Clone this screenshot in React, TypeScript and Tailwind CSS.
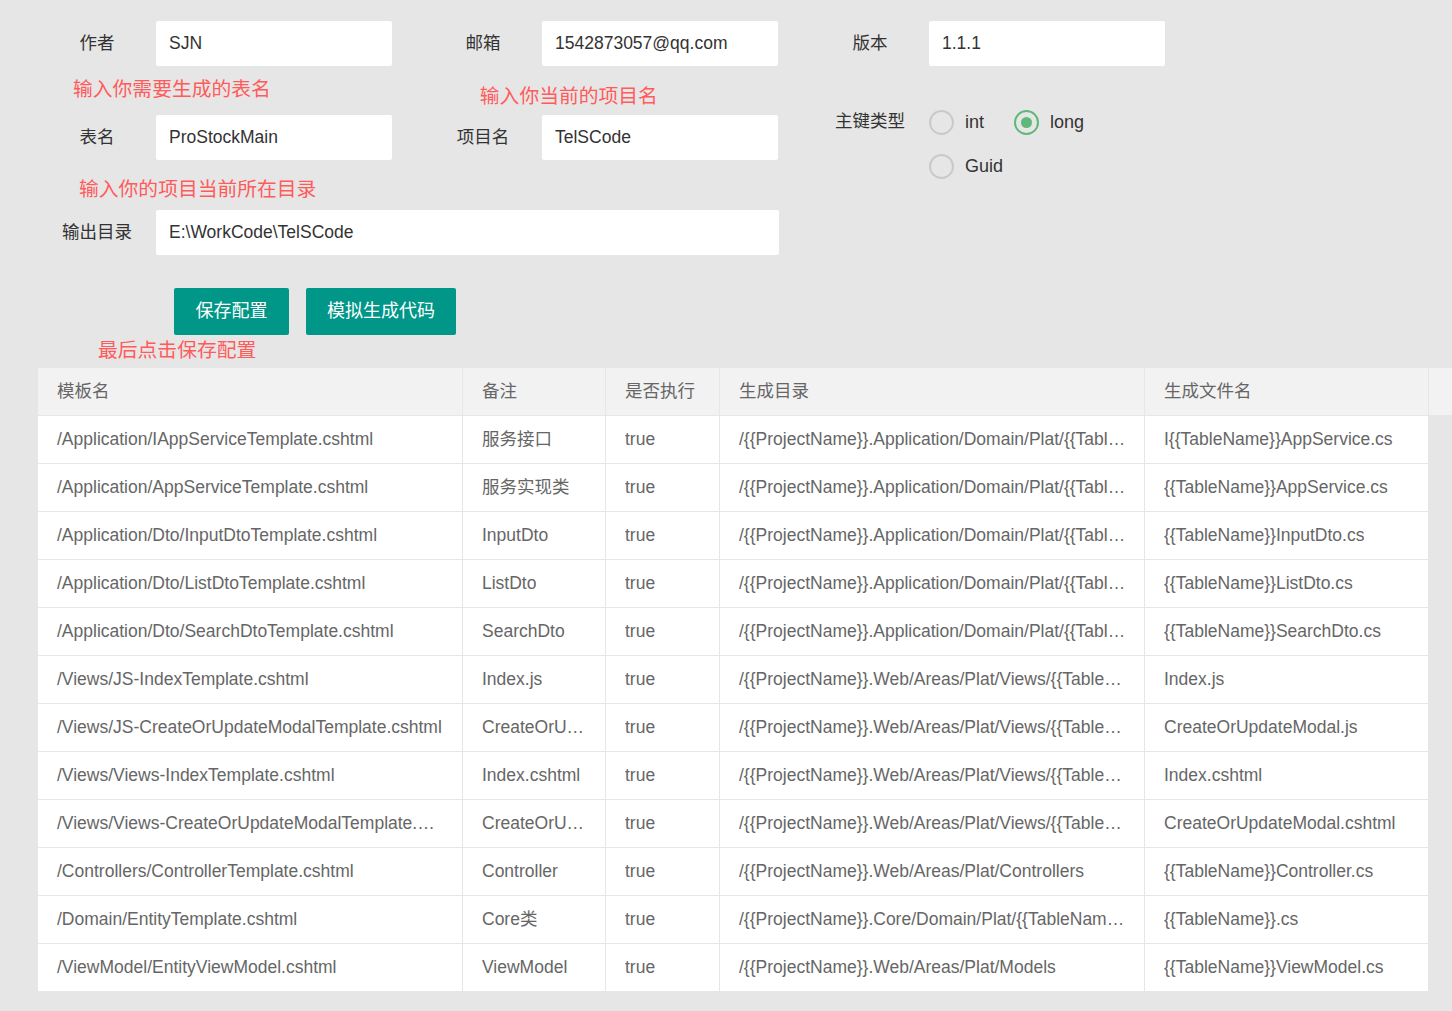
import React from 'react';

const rows: [string, string, string, string][] = [
  ['/Application/IAppServiceTemplate.cshtml', '服务接口', '/{{ProjectName}}.Application/Domain/Plat/{{TableName}}', 'I{{TableName}}AppService.cs'],
  ['/Application/AppServiceTemplate.cshtml', '服务实现类', '/{{ProjectName}}.Application/Domain/Plat/{{TableName}}', '{{TableName}}AppService.cs'],
  ['/Application/Dto/InputDtoTemplate.cshtml', 'InputDto', '/{{ProjectName}}.Application/Domain/Plat/{{TableName}}/Dto', '{{TableName}}InputDto.cs'],
  ['/Application/Dto/ListDtoTemplate.cshtml', 'ListDto', '/{{ProjectName}}.Application/Domain/Plat/{{TableName}}/Dto', '{{TableName}}ListDto.cs'],
  ['/Application/Dto/SearchDtoTemplate.cshtml', 'SearchDto', '/{{ProjectName}}.Application/Domain/Plat/{{TableName}}/Dto', '{{TableName}}SearchDto.cs'],
  ['/Views/JS-IndexTemplate.cshtml', 'Index.js', '/{{ProjectName}}.Web/Areas/Plat/Views/{{TableName}}', 'Index.js'],
  ['/Views/JS-CreateOrUpdateModalTemplate.cshtml', 'CreateOrUpdateModal', '/{{ProjectName}}.Web/Areas/Plat/Views/{{TableName}}', 'CreateOrUpdateModal.js'],
  ['/Views/Views-IndexTemplate.cshtml', 'Index.cshtml', '/{{ProjectName}}.Web/Areas/Plat/Views/{{TableName}}', 'Index.cshtml'],
  ['/Views/Views-CreateOrUpdateModalTemplate.cshtml', 'CreateOrUpdateModal', '/{{ProjectName}}.Web/Areas/Plat/Views/{{TableName}}', 'CreateOrUpdateModal.cshtml'],
  ['/Controllers/ControllerTemplate.cshtml', 'Controller', '/{{ProjectName}}.Web/Areas/Plat/Controllers', '{{TableName}}Controller.cs'],
  ['/Domain/EntityTemplate.cshtml', 'Core类', '/{{ProjectName}}.Core/Domain/Plat/{{TableName}}s/Entities', '{{TableName}}.cs'],
  ['/ViewModel/EntityViewModel.cshtml', 'ViewModel', '/{{ProjectName}}.Web/Areas/Plat/Models', '{{TableName}}ViewModel.cs'],
];

const font = { fontFamily: '"Liberation Sans", Arial, "Noto Sans CJK SC", sans-serif' };

function Field({ label, value, width = 'w-[236px]' }: { label: string; value: string; width?: string }) {
  return (
    <div className="flex items-center">
      <label className="w-[118px] text-center text-[17.5px] text-[#333]">{label}</label>
      <div className={`${width} h-[45px] bg-white rounded-[2px] flex items-center px-[13px] text-[17.5px] text-[#333]`}>
        {value}
      </div>
    </div>
  );
}

function Radio({ label, checked }: { label: string; checked?: boolean }) {
  return (
    <div className="flex items-center gap-[11px] mr-[30px]">
      <span
        className={`w-[25px] h-[25px] rounded-full border-2 flex items-center justify-center ${checked ? 'border-[#5FB878]' : 'border-[#c9c9c9]'}`}
      >
        {checked && <span className="w-[11px] h-[11px] rounded-full bg-[#5FB878]" />}
      </span>
      <span className="text-[18px] text-[#333]">{label}</span>
    </div>
  );
}

export default function App() {
  const cols = ['w-[424px]', 'w-[143px]', 'w-[114px]', 'w-[425px]', 'w-[284px]'];
  const pads = ['pr-[19px]', 'pr-[19px]', 'pr-[19px]', 'pr-[14px]', 'pr-[19px]'];
  return (
    <div className="min-h-screen bg-[#e6e6e6] pb-[19px]" style={font}>
      <div className="flex pl-[38px] pt-[21px]">
        {/* left block */}
        <div className="flex flex-col">
          <div className="flex gap-[32px]">
            <Field label="作者" value="SJN" />
            <Field label="邮箱" value="1542873057@qq.com" />
          </div>
          <div className="h-[49px] flex items-start">
            <span className="ml-[35px] mt-[11px] text-[19.8px] text-[#ff5b5b] leading-[24px]">输入你需要生成的表名</span>
            <span className="ml-[209px] mt-[18px] text-[19.8px] text-[#ff5b5b] leading-[24px]">输入你当前的项目名</span>
          </div>
          <div className="flex gap-[32px]">
            <Field label="表名" value="ProStockMain" />
            <Field label="项目名" value="TelSCode" />
          </div>
          <div className="h-[50px] flex items-start">
            <span className="ml-[41px] mt-[17px] text-[19.8px] text-[#ff5b5b] leading-[24px]">输入你的项目当前所在目录</span>
          </div>
          <Field label="输出目录" value="E:\WorkCode\TelSCode" width="w-[623px]" />
        </div>
        {/* right block */}
        <div className="flex flex-col ml-[32px]">
          <Field label="版本" value="1.1.1" />
          <div className="flex mt-[43px]">
            <label className="w-[118px] text-center text-[17.5px] text-[#333] leading-[26px] mt-[-1px]">主键类型</label>
            <div className="flex flex-wrap w-[200px] gap-y-[17px]">
              <Radio label="int" />
              <Radio label="long" checked />
              <Radio label="Guid" />
            </div>
          </div>
        </div>
      </div>

      <div className="flex gap-[17px] pl-[174px] mt-[33px]">
        <button className="h-[47px] w-[115px] bg-[#009688] text-white text-[18px] rounded-[2px]">保存配置</button>
        <button className="h-[47px] w-[150px] bg-[#009688] text-white text-[18px] rounded-[2px]">模拟生成代码</button>
      </div>
      <div className="pl-[98px] h-[33px] text-[19.8px] text-[#ff5b5b] leading-[30px]">最后点击保存配置</div>

      <div className="ml-[38px] text-[17.5px] text-[#666]">
        <div className="flex h-[48px] bg-[#f2f2f2] border-b border-[#e6e6e6]">
          {['模板名', '备注', '是否执行', '生成目录', '生成文件名'].map((h, i) => (
            <div key={h} className={`${cols[i]} ${i > 0 ? 'border-l border-[#e6e6e6]' : ''} flex items-center pl-[19px] pr-[19px]`}>
              {h}
            </div>
          ))}
          <div className="w-[24px] border-l border-[#e6e6e6]" />
        </div>
        {rows.map((r, ri) => (
          <div key={ri} className="flex h-[48px] w-[1390px] bg-white border-b border-[#e6e6e6]">
            {[r[0], r[1], 'true', r[2], r[3]].map((c, i) => (
              <div key={i} className={`${cols[i]} ${pads[i]} ${i > 0 ? 'border-l border-[#e6e6e6]' : ''} flex items-center pl-[19px] min-w-0`}>
                <span className="truncate block">{c}</span>
              </div>
            ))}
          </div>
        ))}
      </div>
    </div>
  );
}
